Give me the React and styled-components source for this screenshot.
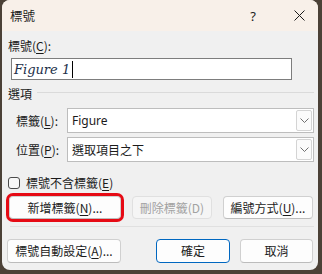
import React from "react";
import styled, { createGlobalStyle } from "styled-components";

const Global = createGlobalStyle`
  html, body { margin: 0; padding: 0; }
  body {
    width: 322px; height: 274px; overflow: hidden;
    background: #4b4137;
    font-family: "Noto Sans CJK TC", "Noto Sans", sans-serif;
    color: #1b1b1b;
  }
  u { text-decoration-thickness: 1px; text-underline-offset: 2px; }
`;

const Win = styled.div`
  margin-left: 2px;
  width: 316px;
  height: 270px;
  border-radius: 8px;
  overflow: hidden;
  background: #f0f0f0;
  display: flex;
  flex-direction: column;
`;

const TitleBar = styled.div`
  height: 31px;
  background: #f8f0e9;
  display: flex;
  align-items: center;
`;

const Title = styled.div`
  flex: 1;
  padding-left: 8px;
  font-size: 12.5px;
  line-height: 16px;
`;

const CapBtn = styled.div`
  width: ${(p) => p.$w}px;
  padding-left: ${(p) => p.$pl || 0}px;
  box-sizing: border-box;
  height: 31px;
  display: flex;
  align-items: center;
  justify-content: center;
  font-family: "Noto Sans", sans-serif;
  font-size: 13px;
`;

const Body = styled.div`
  padding: 7px 4px 0 6px;
  display: flex;
  flex-direction: column;
  font-size: 12px;
`;

const Label = styled.div`
  line-height: 16px;
  height: 16px;
  white-space: nowrap;
`;

const InputBox = styled.div`
  margin: 4px 0 0 3px;
  width: 281px;
  height: 22px;
  box-sizing: border-box;
  border: 1px solid #7d7d7d;
  background: #fff;
  display: flex;
  align-items: center;
  padding-left: 2px;
  font-family: "DejaVu Serif", serif;
  font-style: italic;
  font-size: 13px;
  color: #22304a;
`;

const Caret = styled.span`
  display: inline-block;
  width: 1px;
  height: 17px;
  background: #000;
  margin-left: 2px;
`;

const Section = styled.div`
  margin-top: 6px;
  height: 16px;
  display: flex;
  align-items: center;
  gap: 5px;
  line-height: 16px;
`;

const Rule = styled.div`
  flex: 1;
  height: 1px;
  background: #dadada;
  margin-top: -3px;
`;

const FieldRow = styled.div`
  margin-top: ${(p) => p.$mt}px;
  display: flex;
  align-items: center;
  padding-left: 8px;
`;

const FieldLabel = styled.div`
  width: 51px;
  line-height: 16px;
`;

const Combo = styled.div`
  width: 247px;
  height: 25px;
  box-sizing: border-box;
  border: 1px solid #bdbdbd;
  background: #fff;
  display: flex;
  align-items: center;
  padding: 0 1px 0 4px;
`;

const ComboText = styled.div`
  flex: 1;
  font-size: 12px;
  line-height: 16px;
  font-family: ${(p) => (p.$latin ? '"Noto Sans", sans-serif' : "inherit")};
`;

const DropBtn = styled.div`
  width: 16px;
  height: 21px;
  box-sizing: border-box;
  border: 1px solid #d4d4d4;
  border-radius: 2px;
  background: #fbfbfb;
  display: flex;
  align-items: center;
  justify-content: center;
`;

const CheckRow = styled.div`
  margin-top: 14px;
  height: 14px;
  display: flex;
  align-items: center;
  gap: 6px;
  line-height: 14px;
`;

const Box = styled.div`
  width: 12px;
  height: 12px;
  box-sizing: border-box;
  border: 1px solid #4a4a4a;
  border-radius: 3px;
  background: #f7f7f7;
`;

const BtnRow = styled.div`
  margin-top: ${(p) => p.$mt}px;
  margin-left: ${(p) => p.$ml}px;
  display: flex;
  align-items: center;
`;

const Btn = styled.div`
  width: ${(p) => p.$w}px;
  height: ${(p) => p.$h || 23}px;
  margin-left: ${(p) => p.$ml || 0}px;
  box-sizing: border-box;
  border: 1px solid ${(p) => (p.$primary ? "#0067c0" : p.$disabled ? "#e0e0e0" : "#d0d0d0")};
  border-bottom-color: ${(p) => (p.$primary ? "#0067c0" : p.$disabled ? "#e0e0e0" : "#bcbcbc")};
  border-radius: 4px;
  background: ${(p) => (p.$disabled ? "#f5f5f5" : "#fdfdfd")};
  color: ${(p) => (p.$disabled ? "#a2a2a2" : "#1b1b1b")};
  display: flex;
  align-items: center;
  justify-content: center;
  font-size: 12px;
  line-height: 16px;
  white-space: nowrap;
  box-shadow: ${(p) => (p.$highlight ? "0 0 0 3px #e60a14" : "none")};
`;

const Sep = styled.div`
  margin: 7px 0 0 2px;
  height: 1px;
  background: #e0e0e0;
`;

const Chevron = () => (
  <svg width="9" height="5" viewBox="0 0 9 5">
    <path d="M0.5 0.5 L4.5 4.5 L8.5 0.5" fill="none" stroke="#606060" strokeWidth="0.9" />
  </svg>
);

const CloseIcon = () => (
  <svg width="11" height="11" viewBox="0 0 11 11">
    <path d="M0.5 0.5 L10.5 10.5 M10.5 0.5 L0.5 10.5" stroke="#1b1b1b" strokeWidth="1" />
  </svg>
);

export default function App() {
  return (
    <>
      <Global />
      <Win>
        <TitleBar>
          <Title>標號</Title>
          <CapBtn $w={46}>?</CapBtn>
          <CapBtn $w={42} $pl={4}>
            <CloseIcon />
          </CapBtn>
        </TitleBar>
        <Body>
          <Label>
            標號(<u>C</u>):
          </Label>
          <InputBox>
            Figure 1<Caret />
          </InputBox>
          <Section>
            選項
            <Rule />
          </Section>
          <FieldRow $mt={6}>
            <FieldLabel>
              標籤(<u>L</u>):
            </FieldLabel>
            <Combo>
              <ComboText $latin>Figure</ComboText>
              <DropBtn>
                <Chevron />
              </DropBtn>
            </Combo>
          </FieldRow>
          <FieldRow $mt={4}>
            <FieldLabel>
              位置(<u>P</u>):
            </FieldLabel>
            <Combo>
              <ComboText>選取項目之下</ComboText>
              <DropBtn>
                <Chevron />
              </DropBtn>
            </Combo>
          </FieldRow>
          <CheckRow>
            <Box />
            <span>
              標號不含標籤(<u>E</u>)
            </span>
          </CheckRow>
          <BtnRow $mt={6} $ml={1}>
            <Btn $w={112} $highlight>
              新增標籤(<u>N</u>)...
            </Btn>
            <Btn $w={80} $ml={11} $disabled>
              刪除標籤(D)
            </Btn>
            <Btn $w={90} $ml={11}>
              編號方式(<u>U</u>)...
            </Btn>
          </BtnRow>
          <Sep />
          <BtnRow $mt={12} $ml={-1}>
            <Btn $w={114} $h={24}>
              標號自動設定(<u>A</u>)...
            </Btn>
            <Btn $w={74} $h={24} $ml={35} $primary>
              確定
            </Btn>
            <Btn $w={73} $h={24} $ml={10}>
              取消
            </Btn>
          </BtnRow>
        </Body>
      </Win>
    </>
  );
}
